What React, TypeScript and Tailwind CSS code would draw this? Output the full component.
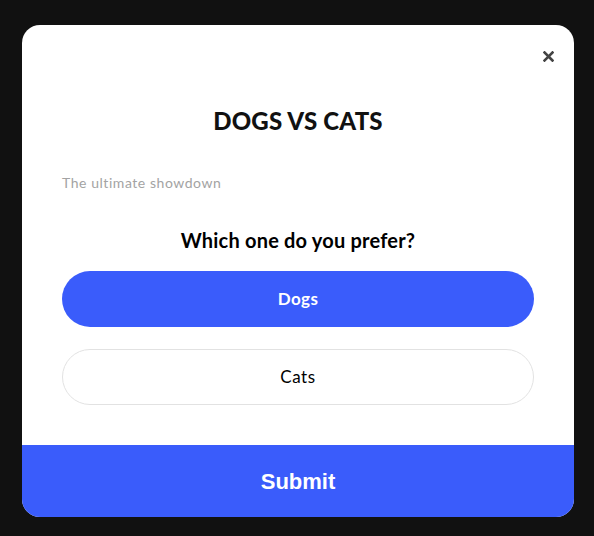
import React from "react";

export default function App() {
  return (
    <div className="min-h-[536px] w-full bg-[#111111] pt-[25px] px-[22px] pb-[19px]" style={{ fontFamily: "Lato, 'Noto Sans', sans-serif" }}>
      <div className="relative w-[552px] h-[492px] bg-white rounded-[18px] overflow-hidden flex flex-col">
        <button className="absolute top-[26px] right-[20px] w-[11px] h-[11px] flex items-center justify-center" aria-label="Close">
          <svg width="11" height="11" viewBox="0 0 11 11">
            <path d="M1.5 1.5 L9.5 9.5 M9.5 1.5 L1.5 9.5" stroke="#444" strokeWidth="2.6" strokeLinecap="square" />
          </svg>
        </button>
        <div className="flex-1 flex flex-col px-[40px] pt-[80px]">
          <h1 className="text-center text-[24px] leading-[32px] font-black text-[#111] tracking-[0.2px]">DOGS VS CATS</h1>
          <p className="mt-[36px] text-[14px] leading-[20px] text-[#a3a3a3] tracking-[0.55px]">The ultimate showdown</p>
          <h2 className="mt-[33px] text-center text-[20px] leading-[28px] font-bold text-black tracking-[0.2px]">Which one do you prefer?</h2>
          <button className="mt-[17px] h-[56px] w-full rounded-full bg-[#3a5cfb] text-white text-[17px] font-bold tracking-[0.4px]">Dogs</button>
          <button className="mt-[22px] h-[56px] w-full rounded-full bg-white border border-[#e2e2e2] text-black text-[17px] tracking-[0.6px]">Cats</button>
        </div>
        <button className="h-[72px] w-full bg-[#3a5cfb] text-white text-[22px] font-bold" style={{ fontFamily: "'Liberation Sans', Arial, sans-serif" }}>Submit</button>
      </div>
    </div>
  );
}
